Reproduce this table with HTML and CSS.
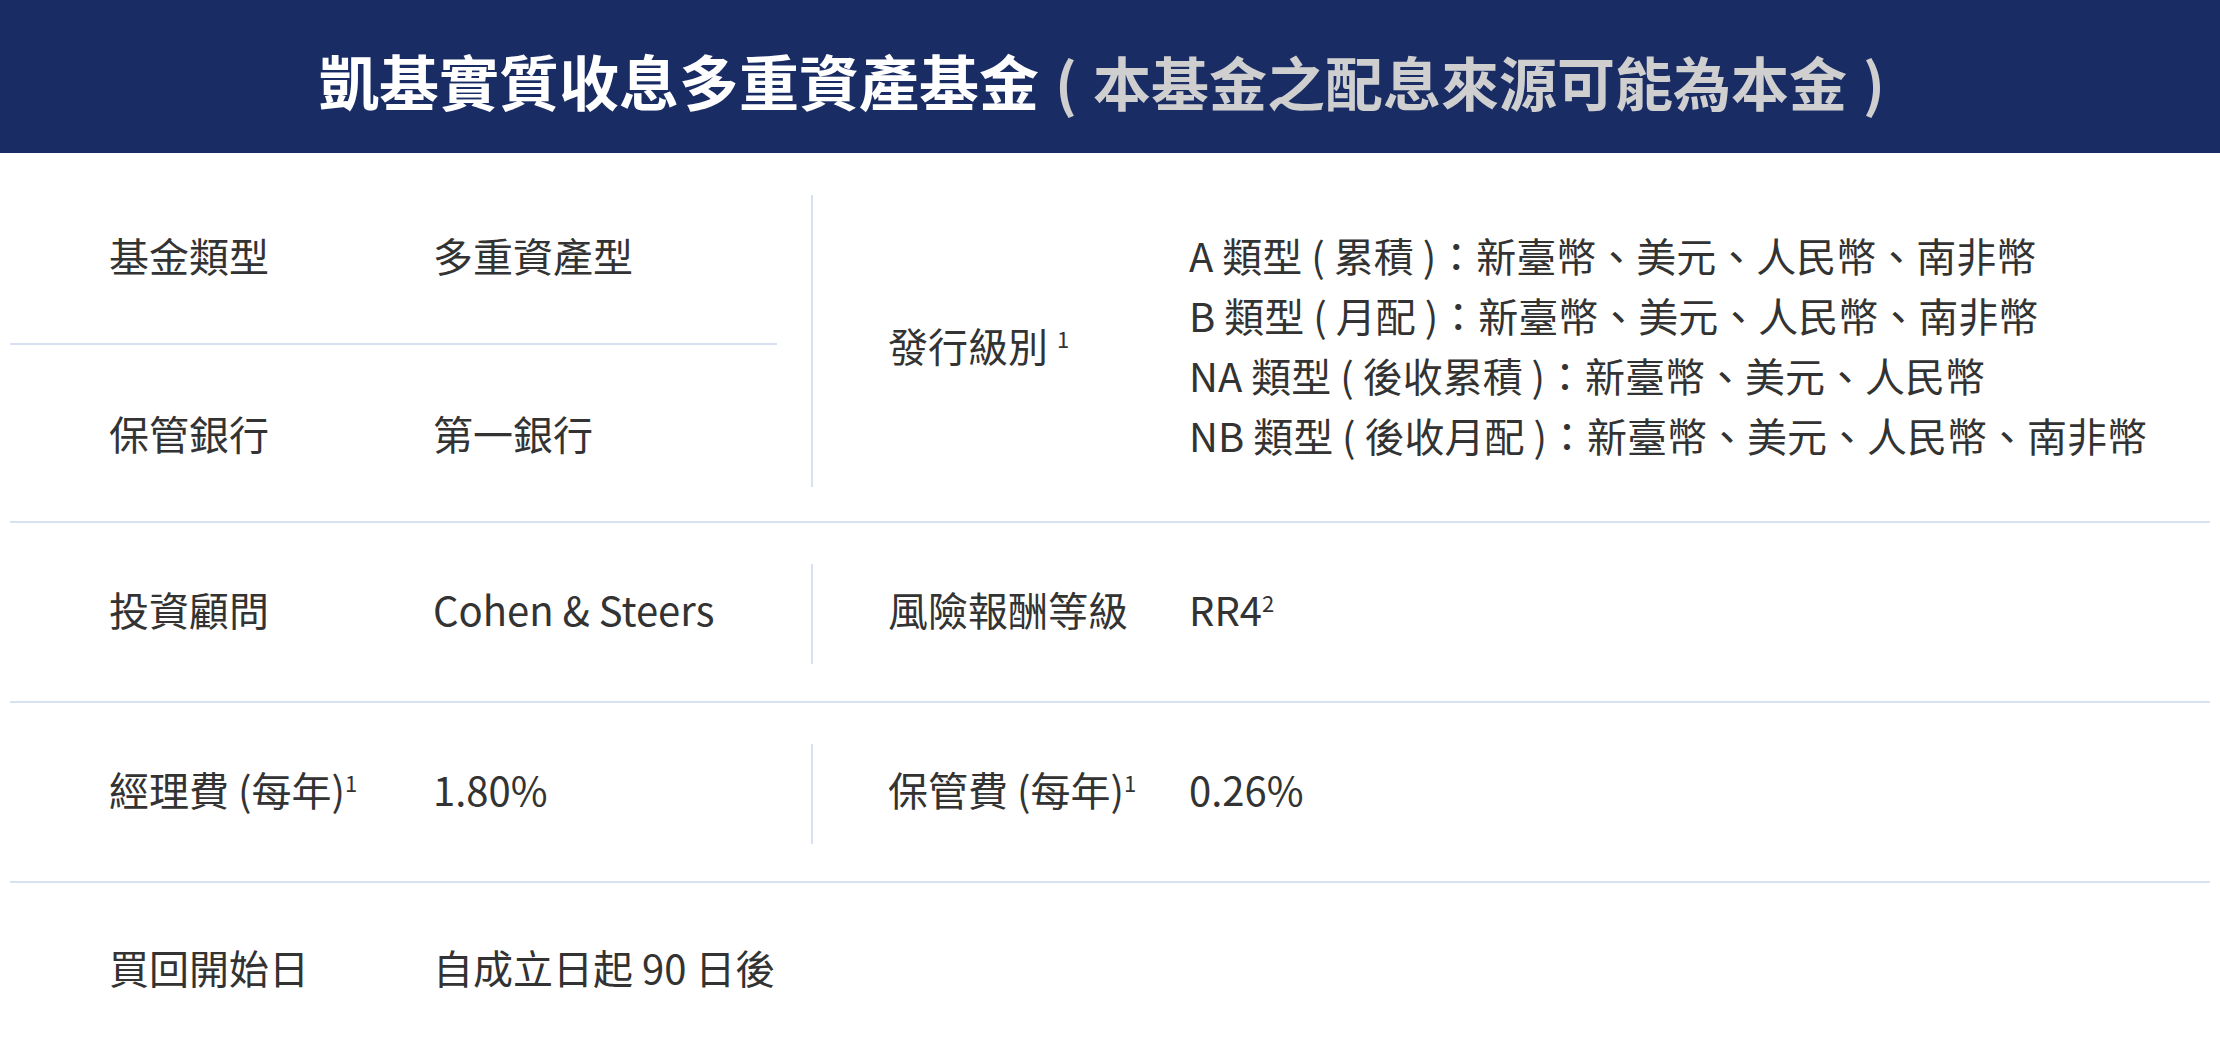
FILE: index.html
```html
<!DOCTYPE html>
<html lang="zh-Hant">
<head>
<meta charset="utf-8">
<title>凱基實質收息多重資產基金</title>
<link rel="stylesheet" href="styles.css">
</head>
<body>
<header class="banner">
  <h1 class="title"><span class="title-main">凱基實質收息多重資產基金</span><span class="title-note"><span class="paren">(</span>本基金之配息來源可能為本金<span class="paren">)</span></span></h1>
</header>
<main class="table">
  <section class="row row-first">
    <div class="left-stack">
      <div class="pair pair-top">
        <div class="label">基金類型</div>
        <div class="value">多重資產型</div>
      </div>
      <div class="pair pair-bottom">
        <div class="label">保管銀行</div>
        <div class="value">第一銀行</div>
      </div>
    </div>
    <div class="cell-right cell-classes">
      <div class="label label-r">發行級別 <sup>1</sup></div>
      <div class="value">A 類型 ( 累積 )：新臺幣、美元、人民幣、南非幣<br>B 類型 ( 月配 )：新臺幣、美元、人民幣、南非幣<br>NA 類型 ( 後收累積 )：新臺幣、美元、人民幣<br>NB 類型 ( 後收月配 )：新臺幣、美元、人民幣、南非幣</div>
    </div>
  </section>
  <section class="row">
    <div class="cell-left">
      <div class="label">投資顧問</div>
      <div class="value">Cohen &amp; Steers</div>
    </div>
    <div class="cell-right">
      <div class="label label-r">風險報酬等級</div>
      <div class="value">RR4<sup>2</sup></div>
    </div>
  </section>
  <section class="row">
    <div class="cell-left">
      <div class="label">經理費 (每年)<sup>1</sup></div>
      <div class="value">1.80%</div>
    </div>
    <div class="cell-right">
      <div class="label label-r">保管費 (每年)<sup>1</sup></div>
      <div class="value">0.26%</div>
    </div>
  </section>
  <section class="row row-last">
    <div class="cell-left">
      <div class="label">買回開始日</div>
      <div class="value">自成立日起 90 日後</div>
    </div>
  </section>
</main>
</body>
</html>
```

FILE: styles.css
```css
html, body {
  margin: 0;
  padding: 0;
}

body {
  font-family: "Noto Sans CJK TC", "Noto Sans", sans-serif;
  color: #333333;
  background: #ffffff;
}

.banner {
  height: 153px;
  background: #192c64;
  display: flex;
  align-items: center;
  justify-content: center;
}

.title {
  margin: 0;
  font-size: 60px;
  font-weight: 700;
  line-height: 1;
  color: #ffffff;
  white-space: nowrap;
  position: relative;
  top: 3px;
}

.title-note {
  color: #cfcfcf;
  font-size: 58px;
}

.paren {
  display: inline-block;
  margin: 0 16px;
}

.table {
  margin: 0 10px;
  font-size: 40px;
  line-height: 60px;
}

.row {
  display: flex;
  align-items: stretch;
  padding: 41px 0 37px;
  border-bottom: 2px solid #d7e1f2;
}

.row-first {
  padding: 42px 0 34px;
}

.row-last {
  border-bottom: none;
  padding: 54px 0 60px;
}

.left-stack {
  width: 767px;
  margin-right: 34px;
  display: flex;
  flex-direction: column;
}

.pair {
  display: flex;
  padding-left: 99px;
}

.pair-top {
  padding-top: 30px;
  padding-bottom: 58px;
  border-bottom: 2px solid #d7e1f2;
}

.pair-bottom {
  padding-top: 58px;
  padding-bottom: 24px;
}

.cell-left {
  width: 668px;
  margin-right: 34px;
  padding: 15px 0 25px 99px;
  display: flex;
}

.row-last .cell-left {
  padding: 0 0 0 99px;
}

.cell-right {
  flex: 1;
  border-left: 2px solid #d7e1f2;
  padding: 15px 0 25px 75px;
  display: flex;
}

.cell-classes {
  padding: 30px 0 22px 75px;
  align-items: center;
}

.label {
  width: 324px;
  flex: none;
  white-space: nowrap;
}

.label-r {
  width: 301px;
}

.value {
  white-space: nowrap;
}

sup {
  font-size: 22px;
  line-height: 0;
  vertical-align: super;
}
```
